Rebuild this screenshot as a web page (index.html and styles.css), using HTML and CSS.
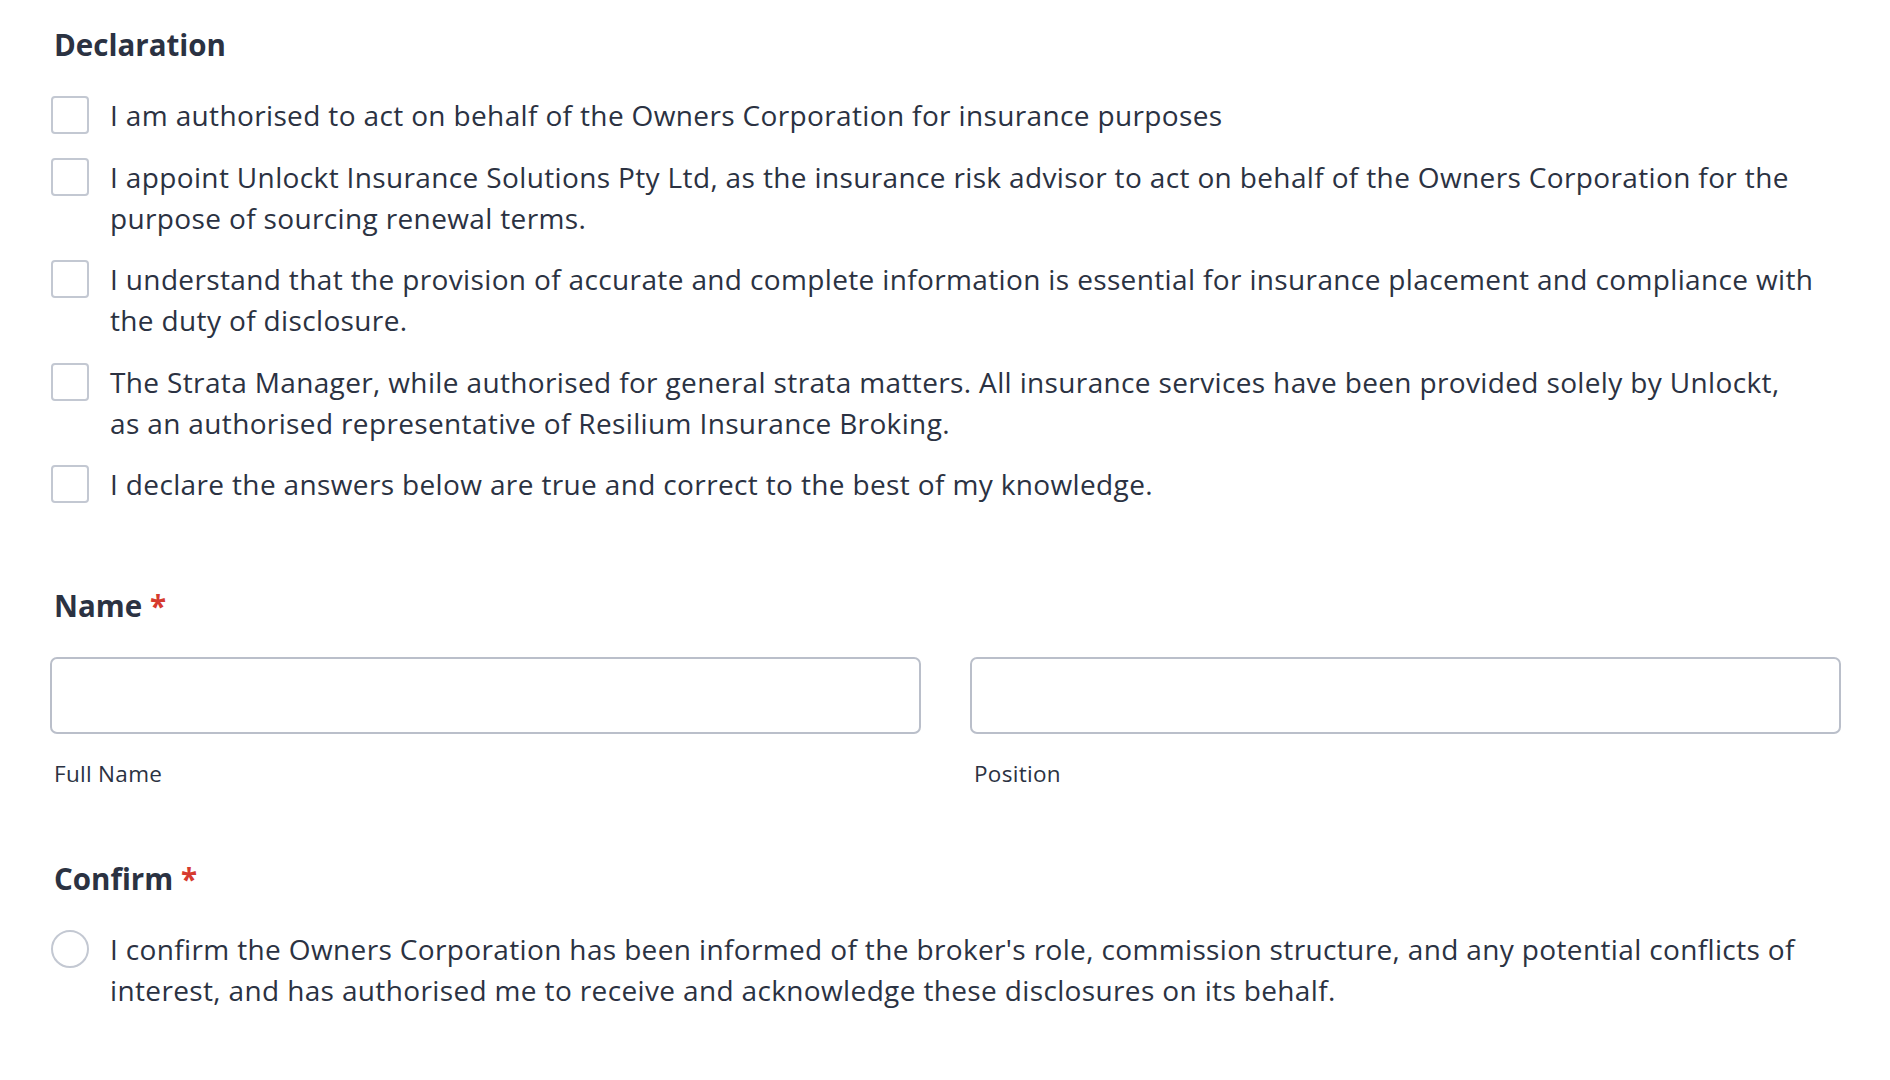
FILE: index.html
```html
<!DOCTYPE html>
<html lang="en">
<head>
<meta charset="utf-8">
<title>Declaration</title>
<link rel="stylesheet" href="styles.css">
</head>
<body>
<form class="form">
  <section class="section section-declaration">
    <h2 class="section-title">Declaration</h2>
    <ul class="check-list">
      <li class="check-item"><span class="checkbox"></span><span class="check-text">I am authorised to act on behalf of the Owners Corporation for insurance purposes</span></li>
      <li class="check-item"><span class="checkbox"></span><span class="check-text">I appoint Unlockt Insurance Solutions Pty Ltd, as the insurance risk advisor to act on behalf of the Owners Corporation for the purpose of sourcing renewal terms.</span></li>
      <li class="check-item"><span class="checkbox"></span><span class="check-text">I understand that the provision of accurate and complete information is essential for insurance placement and compliance with the duty of disclosure.</span></li>
      <li class="check-item"><span class="checkbox"></span><span class="check-text">The Strata Manager, while authorised for general strata matters. All insurance services have been provided solely by Unlockt, as an authorised representative of Resilium Insurance Broking.</span></li>
      <li class="check-item"><span class="checkbox"></span><span class="check-text">I declare the answers below are true and correct to the best of my knowledge.</span></li>
    </ul>
  </section>

  <section class="section section-name">
    <h2 class="section-title">Name <span class="required">*</span></h2>
    <div class="field-row">
      <div class="field">
        <div class="text-input"></div>
        <div class="field-label">Full Name</div>
      </div>
      <div class="field">
        <div class="text-input"></div>
        <div class="field-label">Position</div>
      </div>
    </div>
  </section>

  <section class="section section-confirm">
    <h2 class="section-title">Confirm <span class="required">*</span></h2>
    <div class="check-item radio-item"><span class="radio"></span><span class="check-text">I confirm the Owners Corporation has been informed of the broker's role, commission structure, and any potential conflicts of interest, and has authorised me to receive and acknowledge these disclosures on its behalf.</span></div>
  </section>
</form>
</body>
</html>
```

FILE: styles.css
```css
* { box-sizing: border-box; }

html, body {
  margin: 0;
  padding: 0;
  background: #ffffff;
}

body {
  font-family: "Open Sans", "Noto Sans", Lato, sans-serif;
  color: #2b3242;
}

.form {
  padding: 27px 49px 40px 50px;
}

.section-title {
  margin: 0;
  padding-left: 4px;
  font-size: 29.5px;
  line-height: 36px;
  font-weight: 700;
  color: #2b3242;
}

.required {
  color: #d63b2f;
}

.check-list {
  list-style: none;
  margin: 32px 0 0 0;
  padding: 0;
  display: flex;
  flex-direction: column;
  gap: 20.5px;
}

.check-item {
  display: flex;
  align-items: flex-start;
  gap: 21px;
  font-size: 28px;
  line-height: 41px;
  letter-spacing: 0.36px;
}

.checkbox,
.radio {
  flex: 0 0 38px;
  width: 38px;
  height: 38px;
  margin-top: 1px;
  margin-left: 1px;
  border: 2px solid #c3c8d2;
  background: #fff;
}

.checkbox {
  border-radius: 4px;
}

.radio {
  border-radius: 50%;
}

.check-text {
  flex: 1;
  max-width: 1704px;
}

.section-name {
  margin-top: 83px;
}

.field-row {
  margin-top: 33px;
  display: grid;
  grid-template-columns: 1fr 1fr;
  gap: 49px;
}

.text-input {
  height: 77px;
  border: 2px solid #babfca;
  border-radius: 7px;
}

.field-label {
  margin-top: 25px;
  padding-left: 4px;
  font-size: 22.5px;
  line-height: 30px;
  letter-spacing: 0.3px;
}

.section-confirm {
  margin-top: 72px;
}

.radio-item {
  margin-top: 32px;
}
```
